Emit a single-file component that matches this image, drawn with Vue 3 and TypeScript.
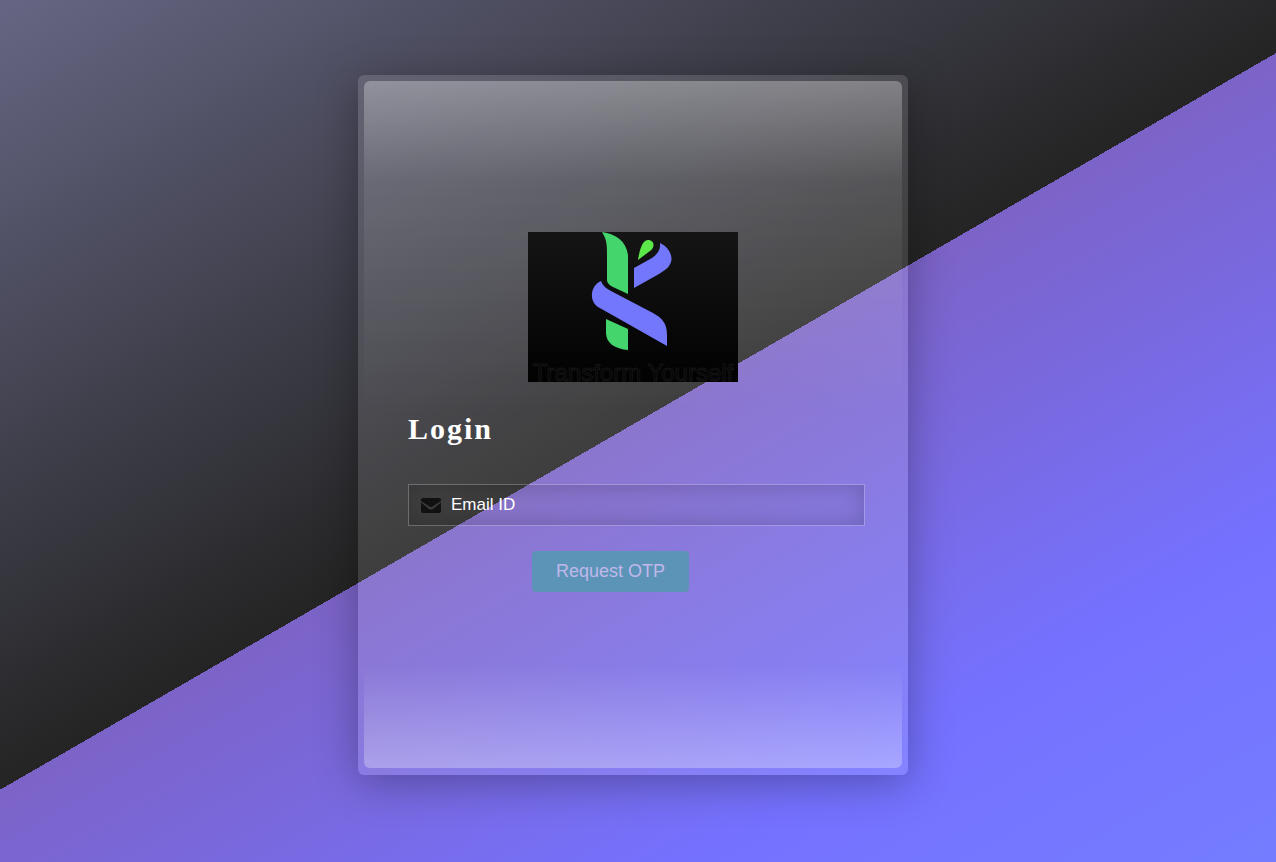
<script setup lang="ts">
import { ref } from 'vue'

const email = ref('')
</script>

<template>
  <main class="page">
    <form class="card" @submit.prevent>
      <div class="panel">
        <svg class="logo" viewBox="0 0 210 150" role="img" aria-label="Logo">
          <defs>
            <linearGradient id="plate" x1="0" y1="0" x2="0" y2="1">
              <stop offset="0" stop-color="#151515" />
              <stop offset="0.5" stop-color="#0b0b0b" />
              <stop offset="0.9" stop-color="#030303" />
              <stop offset="1" stop-color="#020202" />
            </linearGradient>
          </defs>
          <rect width="210" height="150" fill="url(#plate)" />
          <path fill="#44d66c" d="M74 0C88 2 98 9 100 23V62L85 55Q79 52 79 48V24C79 13 79 8 74 0Z" />
          <path fill="#44d66c" d="M78 87L100 97V118C87 117 78 111 78 101Z" />
          <path fill="#5ce848" d="M110 28Q113 8 120 8C127 8 127 16 122 19Z" />
          <path fill="#7377fb" d="M106 36L124 26Q133 20 132 11C141 15 145 24 143 30C141 36 137 38 131 42L106 56Z" />
          <path fill="#7377fb" d="M73 49C62 54 61 69 70 75L86 84L139 114V103C139 91 134 86 125 81L83 59Q75 55 73 49Z" />
          <text class="motto" x="105" y="149" text-anchor="middle">Transform Yourself</text>
        </svg>
        <h1>Login</h1>
        <div class="field">
          <svg class="mail" viewBox="0 0 20 15" aria-hidden="true">
            <path d="M2 0H18A2 2 0 0 1 20 2V3L11 9Q10 9.700 9 9L0 3V2A2 2 0 0 1 2 0Z" />
            <path d="M0 4.500L8.200 11Q10 12.200 11.800 11L20 4.500V13A2 2 0 0 1 18 15H2A2 2 0 0 1 0 13Z" />
          </svg>
          <input v-model="email" type="email" placeholder="Email ID" aria-label="Email ID" />
        </div>
        <button type="submit" disabled>Request OTP</button>
      </div>
    </form>
  </main>
</template>

<style>
body {
  margin: 0;
}
</style>

<style scoped>
.page {
  box-sizing: border-box;
  min-height: 100vh;
  padding: 75px 10px 87px 0;
  display: flex;
  justify-content: center;
  align-items: flex-start;
  font-family: "Liberation Sans", Arial, sans-serif;
  background: linear-gradient(150deg, #666684 0%, #242424 49.4%, #7c63c7 49.4%, #7571ff 79%, #747dff 100%);
}

.card {
  box-sizing: border-box;
  width: 550px;
  max-width: 100%;
  padding: 6px 6px 7px;
  border-radius: 6px;
  background: rgba(255, 255, 255, 0.12);
  box-shadow: 0 8px 44px rgba(0, 0, 0, 0.3);
}

.panel {
  box-sizing: border-box;
  min-height: 687px;
  padding: 151px 37px 176px 44px;
  border-radius: 6px;
  display: flex;
  flex-direction: column;
  background:
    linear-gradient(to bottom, rgba(255, 255, 255, 0.3), rgba(255, 255, 255, 0.09) 100px, rgba(255, 255, 255, 0) 340px),
    linear-gradient(to top, rgba(255, 255, 255, 0.29), rgba(255, 255, 255, 0) 104px);
}

.logo {
  display: block;
  width: 210px;
  height: 150px;
  margin-left: 120px;
}

.motto {
  font: 24px "Liberation Sans", Arial, sans-serif;
  fill: none;
  stroke: #141414;
  stroke-width: 1px;
}

h1 {
  margin: 30px 0 38px;
  font: bold 30px/34px "Liberation Serif", "Times New Roman", serif;
  letter-spacing: 2px;
  color: #fff;
}

.field {
  box-sizing: border-box;
  height: 42px;
  padding: 0 12px;
  display: flex;
  align-items: center;
  gap: 10px;
  border: 1px solid rgba(255, 255, 255, 0.24);
  background: rgba(0, 0, 0, 0.02);
  box-shadow: inset 0 0 25px rgba(0, 0, 0, 0.2);
}

.mail {
  width: 20px;
  height: 15px;
  fill: #111;
}

input {
  flex: 1;
  min-width: 0;
  padding: 0;
  border: 0;
  outline: 0;
  background: transparent;
  font: 17px/20px "Liberation Sans", Arial, sans-serif;
  color: #fff;
}

input::placeholder {
  color: #fff;
  opacity: 1;
}

button {
  width: 157px;
  height: 41px;
  margin: 25px 0 0 124px;
  padding: 0 0 2px;
  border: 0;
  border-radius: 4px;
  background: #5c94b8;
  font: 18px/22px "Liberation Sans", Arial, sans-serif;
  color: #c0b8ea;
}
</style>
